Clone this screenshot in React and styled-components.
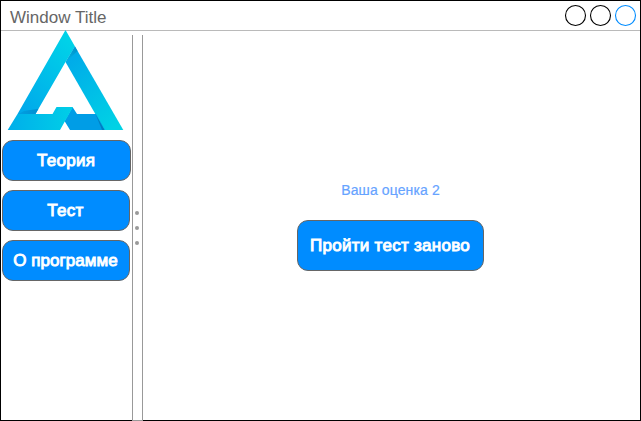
import React from 'react';
import styled, { createGlobalStyle } from 'styled-components';

const GlobalStyle = createGlobalStyle`
  * { box-sizing: border-box; }
  body { margin: 0; background: #fff; font-family: "Liberation Sans", Arial, sans-serif; }
`;

const Window = styled.div`
  width: 641px;
  height: 421px;
  display: flex;
  flex-direction: column;
  border: 1px solid #000;
  background: #fff;
`;

const TitleBar = styled.header`
  flex: none;
  height: 30px;
  display: flex;
  align-items: center;
  justify-content: space-between;
  padding: 2px 3px 0 9px;
  border-bottom: 1px solid #bababa;
`;

const Title = styled.h1`
  margin: 2px 0 0;
  font-size: 17px;
  font-weight: 400;
  line-height: 20px;
  letter-spacing: 0;
  color: #666;
`;

const Controls = styled.svg`
  display: block;
  width: 73px;
  height: 24px;
  margin-top: -1px;
`;

const Body = styled.div`
  flex: 1;
  min-height: 0;
  display: flex;
`;

const Sidebar = styled.nav`
  flex: none;
  width: 131px;
  display: flex;
  flex-direction: column;
  gap: 9px;
  padding-left: 1px;
`;

const Logo = styled.svg`
  display: block;
  width: 117px;
  height: 101px;
  margin: -1px 0 0 5px;
`;

const Button = styled.button`
  flex: none;
  width: ${(p) => p.$width || 128.5}px;
  height: ${(p) => p.$height || 41}px;
  margin: 0 0 0 ${(p) => p.$shift || 0}px;
  padding: 0 1px 0 0;
  display: flex;
  align-items: center;
  justify-content: center;
  border: 1px solid #666;
  border-radius: 11px;
  background: #008cff;
  color: #fff;
  font: 400 17px/20px "Liberation Sans", Arial, sans-serif;
  letter-spacing: ${(p) => p.$tracking || 0}px;
  -webkit-text-stroke: 0.9px #fff;
  white-space: nowrap;
`;

const Splitter = styled.div`
  flex: none;
  width: 11px;
  height: 386px;
  margin-top: 4px;
  display: flex;
  flex-direction: column;
  align-items: center;
  gap: 11px;
  padding: 176px 0.5px 0 0;
  border: solid #999;
  border-width: 0 1px 1px;
`;

const Dot = styled.span`
  width: 4px;
  height: 4px;
  border-radius: 50%;
  background: #999;
`;

const Content = styled.main`
  flex: 1;
  display: flex;
  flex-direction: column;
  align-items: flex-start;
  padding: 151px 0 0 154px;
`;

const Score = styled.p`
  width: 187px;
  margin: 0 0 22px;
  text-align: center;
  font-size: 14px;
  line-height: 16px;
  letter-spacing: 0.12px;
  color: #66a3ff;
  -webkit-text-stroke: 0.2px #66a3ff;
`;

export default function App() {
  return (
    <>
      <GlobalStyle />
      <Window>
        <TitleBar>
          <Title>Window Title</Title>
          <Controls viewBox="0 0 73 24" fill="none" strokeWidth="1.1">
            <circle cx="11.5" cy="11.5" r="10" stroke="#000" />
            <circle cx="36.5" cy="11.5" r="10" stroke="#000" />
            <circle cx="61.5" cy="11.5" r="10" stroke="#008cff" />
          </Controls>
        </TitleBar>
        <Body>
          <Sidebar>
            <Logo viewBox="7 30 117 101">
              <defs>
                <linearGradient id="left" x1="0" y1="1" x2="0.7" y2="0">
                  <stop offset="0" stopColor="#00a6eb" />
                  <stop offset="1" stopColor="#00d2e8" />
                </linearGradient>
                <linearGradient id="right" x1="0.2" y1="0" x2="0.8" y2="1">
                  <stop offset="0" stopColor="#00a9e9" />
                  <stop offset="1" stopColor="#00d2e5" />
                </linearGradient>
                <linearGradient id="base" x1="0" y1="0" x2="1" y2="0">
                  <stop offset="0" stopColor="#00aeea" />
                  <stop offset="1" stopColor="#00cfe7" />
                </linearGradient>
                <linearGradient id="topFold" x1="0" y1="1" x2="1" y2="0">
                  <stop offset="0" stopColor="#00b4e2" />
                  <stop offset="1" stopColor="#008fcb" />
                </linearGradient>
                <linearGradient id="baseFold" x1="0" y1="0" x2="1" y2="0">
                  <stop offset="0" stopColor="#00a0e2" />
                  <stop offset="1" stopColor="#008fd2" />
                </linearGradient>
              </defs>
              <path d="M65.5 30L75 46.5L65.5 62L35.5 114H17.5Z" fill="url(#left)" />
              <path d="M75 46.5L123.3 130H104.5L65.5 62Z" fill="url(#right)" />
              <path d="M75 46.5L77.5 51L66 61.5Z" fill="url(#topFold)" />
              <path d="M18 114.3L24 111L38.5 108.8L35.3 114.3Z" fill="url(#baseFold)" />
              <path d="M72.5 107L77 114H96L105 130H70L64.5 121Z" fill="#009de6" />
              <path d="M95.5 114L104.5 130H102Z" fill="#007fc1" />
              <path d="M17.5 114H52.5L56.5 107H73L60 130H7.7Z" fill="url(#base)" />
            </Logo>
            <Button $tracking={0.3} $shift={0.4}>Теория</Button>
            <Button $width={128} $tracking={0.3}>Тест</Button>
            <Button $width={128} $tracking={0.05}>О программе</Button>
          </Sidebar>
          <Splitter>
            <Dot />
            <Dot />
            <Dot />
          </Splitter>
          <Content>
            <Score>Ваша оценка 2</Score>
            <Button $width={187} $height={51} $tracking={0.27}>Пройти тест заново</Button>
          </Content>
        </Body>
      </Window>
    </>
  );
}
